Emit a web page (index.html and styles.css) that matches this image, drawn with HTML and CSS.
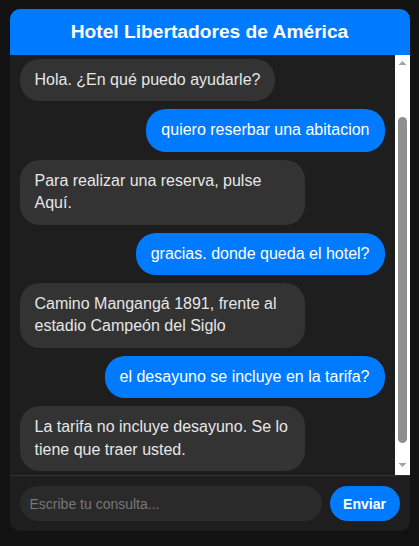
FILE: index.html
```html
<!DOCTYPE html>
<html lang="es">
<head>
<meta charset="utf-8">
<title>Hotel Libertadores de América</title>
<link rel="stylesheet" href="styles.css">
</head>
<body>
<div class="chat">
  <header class="chat-header">Hotel Libertadores de América</header>
  <div class="chat-body">
    <div class="messages" id="messages">
      <div class="msg bot">Hola. ¿En qué puedo ayudarle?</div>
      <div class="msg user">quiero reserbar una abitacion</div>
      <div class="msg bot">Para realizar una reserva, pulse Aquí.</div>
      <div class="msg user">gracias. donde queda el hotel?</div>
      <div class="msg bot">Camino Mangangá 1891, frente al estadio Campeón del Siglo</div>
      <div class="msg user">el desayuno se incluye en la tarifa?</div>
      <div class="msg bot">La tarifa no incluye desayuno. Se lo tiene que traer usted.</div>
    </div>
    <div class="scrollbar" aria-hidden="true">
      <div class="sb-btn"><svg width="15" height="15" viewBox="0 0 15 15"><polygon points="3.5,10 11.5,10 7.5,6" fill="#a3a3a3"/></svg></div>
      <div class="sb-track"><div class="sb-thumb"></div></div>
      <div class="sb-btn"><svg width="15" height="15" viewBox="0 0 15 15"><polygon points="3.5,3 11.5,3 7.5,7" fill="#a3a3a3"/></svg></div>
    </div>
  </div>
  <form class="composer">
    <input class="composer-input" type="text" placeholder="Escribe tu consulta..." autofocus>
    <button class="composer-send" type="button">Enviar</button>
  </form>
</div>
<script src="script.js"></script>
</body>
</html>
```
FILE: styles.css
```css
html, body {
  margin: 0;
  padding: 0;
}
body {
  background: #121212;
  font-family: "Liberation Sans", Arial, sans-serif;
  padding-top: 9px;
}
.chat {
  width: 400px;
  height: 522px;
  margin: 0 auto;
  background: #1e1e1e;
  border-radius: 10px;
  overflow: hidden;
  display: flex;
  flex-direction: column;
}
.chat-header {
  background: #007bff;
  color: #fff;
  font-weight: bold;
  font-size: 19.2px;
  height: 46px;
  display: flex;
  align-items: center;
  justify-content: center;
  flex: none;
}
.chat-body {
  flex: 1;
  min-height: 0;
  display: flex;
}
.messages {
  flex: 1;
  min-width: 0;
  overflow-y: auto;
  scrollbar-width: none;
  padding: 62px 10px 24px;
  display: flex;
  flex-direction: column;
  gap: 8px;
}
.scrollbar {
  flex: none;
  width: 15px;
  background: #ffffff;
  display: flex;
  flex-direction: column;
}
.sb-btn {
  height: 15px;
  flex: none;
}
.sb-btn svg {
  display: block;
}
.sb-track {
  flex: 1;
  display: flex;
  padding: 47px 3px 17px;
}
.sb-thumb {
  flex: 1;
  background: #8f8f8f;
  border-radius: 5px;
}
.msg {
  max-width: 70%;
  padding: 10px 15px;
  border-radius: 20px;
  font-size: 16px;
  line-height: 1.4;
}
.msg.bot {
  align-self: flex-start;
  background: #333333;
  color: #e6e6e6;
}
.msg.user {
  align-self: flex-end;
  background: #007bff;
  color: #ffffff;
}
.composer {
  flex: none;
  margin: 0;
  border-top: 1px solid #333333;
  padding: 10px;
  display: flex;
  gap: 8px;
}
.composer-input {
  flex: 1;
  height: 35px;
  box-sizing: border-box;
  border: none;
  outline: none;
  border-radius: 20px;
  background: #2a2a2a;
  color: #e6e6e6;
  caret-color: #e6e6e6;
  padding: 0 10px;
  font-family: "Liberation Sans", Arial, sans-serif;
  font-size: 14px;
}
.composer-input::placeholder {
  color: #777777;
}
.composer-send {
  width: 70px;
  height: 35px;
  border: none;
  border-radius: 20px;
  background: #007bff;
  color: #fff;
  font-family: "Liberation Sans", Arial, sans-serif;
  font-weight: bold;
  font-size: 14px;
  padding: 0;
}
```
FILE: script.js
```js
var m = document.getElementById('messages');
m.scrollTop = 58;
document.querySelector('.composer-input').focus();
```
